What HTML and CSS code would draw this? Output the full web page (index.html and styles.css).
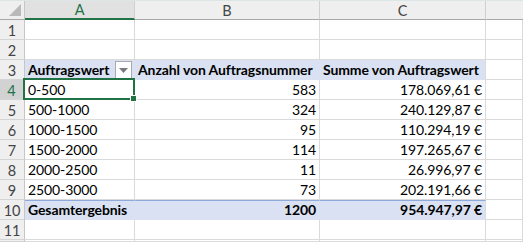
FILE: index.html
```html
<!DOCTYPE html>
<html lang="de">
<head>
<meta charset="utf-8">
<title>Pivot</title>
<link rel="stylesheet" href="styles.css">
</head>
<body>
<div class="sheet">
  <div class="corner"><svg class="tri" width="13" height="13" viewBox="0 0 13 13"><polygon points="12,0 12,12 0,12" fill="#b9b9b9"/></svg></div>
  <div class="colhead sel">A</div>
  <div class="colhead">B</div>
  <div class="colhead">C</div>
  <div class="colhead last"></div>

  <div class="rowhead">1</div><div class="cell"></div><div class="cell"></div><div class="cell"></div><div class="cell"></div>
  <div class="rowhead">2</div><div class="cell"></div><div class="cell"></div><div class="cell"></div><div class="cell"></div>

  <div class="rowhead">3</div>
  <div class="cell pvhead filtercell"><span>Auftragswert</span><span class="dd"><svg width="9" height="5" viewBox="0 0 9 5"><polygon points="0,0 9,0 4.5,5" fill="#7a7a7a"/></svg></span></div>
  <div class="cell pvhead">Anzahl von Auftragsnummer</div>
  <div class="cell pvhead pvlast">Summe von Auftragswert</div>
  <div class="cell"></div>

  <div class="rowhead selrow">4</div><div class="cell active">0-500</div><div class="cell num">583</div><div class="cell num">178.069,61 €</div><div class="cell"></div>
  <div class="rowhead">5</div><div class="cell">500-1000</div><div class="cell num">324</div><div class="cell num">240.129,87 €</div><div class="cell"></div>
  <div class="rowhead">6</div><div class="cell">1000-1500</div><div class="cell num">95</div><div class="cell num">110.294,19 €</div><div class="cell"></div>
  <div class="rowhead">7</div><div class="cell">1500-2000</div><div class="cell num">114</div><div class="cell num">197.265,67 €</div><div class="cell"></div>
  <div class="rowhead">8</div><div class="cell">2000-2500</div><div class="cell num">11</div><div class="cell num">26.996,97 €</div><div class="cell"></div>
  <div class="rowhead">9</div><div class="cell">2500-3000</div><div class="cell num">73</div><div class="cell num">202.191,66 €</div><div class="cell"></div>

  <div class="rowhead">10</div>
  <div class="cell total">Gesamtergebnis</div>
  <div class="cell total num">1200</div>
  <div class="cell total num totlast">954.947,97 €</div>
  <div class="cell"></div>

  <div class="rowhead">11</div><div class="cell"></div><div class="cell"></div><div class="cell"></div><div class="cell"></div>
  <div class="rowhead stub"></div><div class="cell"></div><div class="cell"></div><div class="cell"></div><div class="cell"></div>
</div>
</body>
</html>
```
FILE: styles.css
```css
html, body {
  margin: 0;
  padding: 0;
  background: #ffffff;
  overflow: hidden;
}

.sheet {
  display: grid;
  grid-template-columns: 25px 110px 185px 166px 37px;
  grid-template-rows: 19px repeat(11, 20px) 1fr;
  width: 523px;
  height: 242px;
  overflow: hidden;
  font-family: "Lato", "Liberation Sans", sans-serif;
  font-size: 14px;
  letter-spacing: -0.1px;
  color: #000;
  border-top: 1px solid #dbe6e6;
  box-sizing: border-box;
}

.corner {
  background: #efefef;
  border-right: 1px solid #c6c6c6;
  border-bottom: 1px solid #a8a8a8;
  display: flex;
  align-items: flex-end;
  justify-content: flex-end;
  padding: 0 2px 2px 0;
  box-sizing: border-box;
}

.colhead {
  background: #efefef;
  border-right: 1px solid #d0d0d0;
  border-bottom: 1px solid #a8a8a8;
  color: #444;
  display: flex;
  align-items: center;
  justify-content: center;
  font-size: 14.5px;
  box-sizing: border-box;
}

.colhead.sel {
  background: #e1e1e1;
  color: #217346;
  border-bottom: 2px solid #217346;
}

.colhead.last {
  border-right: none;
}

.rowhead {
  background: #efefef;
  border-right: 1px solid #c6c6c6;
  border-bottom: 1px solid #d4d4d4;
  color: #444;
  display: flex;
  align-items: center;
  justify-content: center;
  box-sizing: border-box;
  padding-top: 1px;
  font-size: 14.5px;
  overflow: hidden;
}

.rowhead.selrow {
  background: #d2d2d2;
  color: #217346;
  border-right: 2px solid #217346;
}

.cell {
  border-right: 1px solid #dadada;
  border-bottom: 1px solid #dadada;
  box-sizing: border-box;
  display: flex;
  align-items: flex-end;
  padding: 0 3px 1px 3px;
  white-space: nowrap;
  line-height: 17px;
  overflow: visible;
}

.num {
  justify-content: flex-end;
}

.pvhead {
  background: #d9e1f2;
  font-weight: 700;
  border-right-color: #d9e1f2;
  border-bottom-color: #d9e1f2;
}

.pvhead.pvlast {
  border-right-color: #dadada;
}

.filtercell {
  position: relative;
  justify-content: space-between;
  padding-right: 2px;
}

.dd {
  width: 17px;
  height: 18px;
  box-sizing: border-box;
  background: #ffffff;
  border: 1px solid #ababab;
  display: flex;
  align-items: center;
  justify-content: center;
  margin-bottom: -1px;
}

.total {
  background: #d9e1f2;
  font-weight: 700;
  border-top: 1px solid #8ea9db;
  border-right-color: #d9e1f2;
  border-bottom-color: #d9e1f2;
  line-height: 16px;
}

.total.totlast {
  border-right-color: #dadada;
}

.active {
  position: relative;
}

.active::after {
  content: "";
  position: absolute;
  left: -2px;
  top: -2px;
  width: 112px;
  height: 22px;
  border: 2px solid #217346;
  box-sizing: border-box;
}

.active::before {
  content: "";
  position: absolute;
  right: -3px;
  bottom: -3px;
  width: 5px;
  height: 5px;
  background: #217346;
  border: 1px solid #fff;
  z-index: 2;
}
```
